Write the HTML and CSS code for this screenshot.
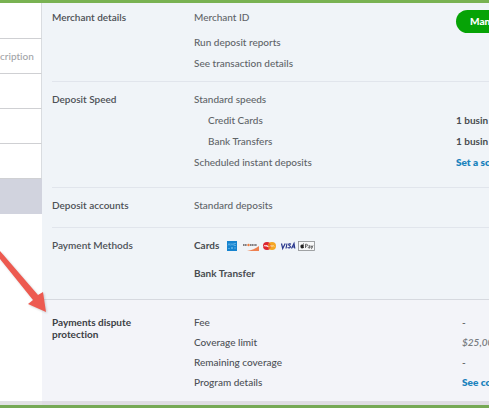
FILE: index.html
```html
<!DOCTYPE html>
<html lang="en">
<head>
  <meta charset="UTF-8">
  <meta name="viewport" content="width=device-width,initial-scale=1">
  <title>Merchant details</title>
  <link rel="stylesheet" href="styles.css">
</head>
<body>
  <div class="page">
    <!-- Transaction list -->
    <aside class="sidebar">
      <div class="cell first"></div>
      <div class="cell heading">cription</div>
      <div class="cell"></div>
      <div class="cell"></div>
      <div class="cell"></div>
      <div class="cell selected"></div>
    </aside>

    <!-- Settings panel -->
    <main class="panel">
      <section class="group merchant">
        <h2>Merchant details</h2>
        <ul>
          <li>Merchant ID <button class="manage" type="button">Man</button></li>
          <li>Run deposit reports</li>
          <li>See transaction details</li>
        </ul>
      </section>

      <section class="group speed">
        <h2>Deposit Speed</h2>
        <ul>
          <li>Standard speeds</li>
          <li class="sub">Credit Cards <b class="value">1 busin</b></li>
          <li class="sub">Bank Transfers <b class="value">1 busin</b></li>
          <li>Scheduled instant deposits <a class="value" href="#">Set a sc</a></li>
        </ul>
      </section>

      <section class="group accounts">
        <h2>Deposit accounts</h2>
        <ul>
          <li>Standard deposits</li>
        </ul>
      </section>

      <section class="group methods">
        <h2>Payment Methods</h2>
        <ul>
          <li>
            <b>Cards</b>
            <svg class="cards" viewBox="0 0 90 12" role="img" aria-label="Accepted cards">
              <!-- Amex -->
              <rect x="1" y="1" width="10" height="10" fill="#1683cf"/>
              <path d="M2 5.5l1-2 1 2M5 5.5v-2l1 1 1-1v2M10 3.5H8v2h2M2 8.5h2M5 7l2 2m0-2L5 9M8 8h2" fill="none" stroke="#7cc4ee" stroke-width=".6"/>
              <!-- Discover -->
              <path d="M17 5h4M24 5h7" stroke="#5b5558" stroke-width="1.6" stroke-dasharray="1.3 .4"/>
              <circle cx="22.5" cy="5" r="1.2" fill="#ed7b3b"/>
              <path d="M33 6v5H21q7-1 12-5z" fill="#ee8050"/>
              <!-- Mastercard -->
              <circle cx="41" cy="6" r="4" fill="#dc2430"/>
              <circle cx="46" cy="6" r="4" fill="#f5a623"/>
              <path d="M43.5 2.9a4 4 0 0 1 0 6.2a4 4 0 0 1 0-6.2z" fill="#ed6a24"/>
              <path d="M38 6.5l1-1.500 1 1.500 1-1.500v1.500h1.500M44 6.500l1-1 1 1 1-1 1 1" fill="none" stroke="#fff" stroke-width=".8"/>
              <!-- Visa -->
              <path d="M55.5 3.500l1.200 5 2.500-5M61 3.500l-1 5M65 4.100q-2.500-.8-2.300.7c.1 1 2 .8 1.700 2.100-.3 1.300-1.700 1.200-2.900.6M65.500 8.500l2.500-5 .8 5M66.500 7h2.200" fill="none" stroke="#27358c" stroke-width="1.2"/>
              <!-- Apple Pay -->
              <rect x="72.5" y="1.5" width="16" height="9" fill="#f7f8f9" stroke="#8b8d90" stroke-width=".8"/>
              <path d="M76.800 4.600c-3-1-3 3.800-.8 3.800 1 0 2.400-.5 2-1.400-.7-.6-.6-1.300.1-1.900-.4-.5-.9-.6-1.300-.5zM77 4.300q0-1.100 1-1.300 0 1.100-1 1.300z" fill="#222"/>
              <path d="M79.500 8V4.200h.8q1.300 0 1.300 1t-1.300 1h-.8M82.500 5.800q1.500-.6 1.500.4V8q-1.800.4-1.700-.6.100-.7 1.700-.6M85 5.400l1 2.400 1-2.400M86 7.800q-.3 1.200-1 1.100" fill="none" stroke="#333" stroke-width=".7"/>
            </svg>
          </li>
          <li><b>Bank Transfer</b></li>
        </ul>
      </section>

      <section class="group dispute">
        <h2>Payments dispute protection</h2>
        <ul>
          <li>Fee <span class="value">-</span></li>
          <li>Coverage limit <i class="value">$25,00</i></li>
          <li>Remaining coverage <span class="value">-</span></li>
          <li>Program details <a class="value" href="#">See co</a></li>
        </ul>
      </section>
    </main>

    <!-- Pointer over the dispute section -->
    <svg class="arrow" viewBox="0 0 50 66" aria-hidden="true">
      <path d="M0 2L38 46L43 43L46 63L28 55L33 51L0 10z" fill="#ed5a50"/>
    </svg>
  </div>
</body>
</html>
```

FILE: styles.css
```css
* { margin: 0; padding: 0; box-sizing: border-box; }

body {
  background: #fff;
  color: #606468;
  font: 500 10px/21px Lato, "Open Sans", sans-serif;
  font-variant-ligatures: none;
  overflow: hidden;
}

.page {
  position: relative;
  display: grid;
  grid-template-columns: 42px 1fr;
  min-height: 100vh;
  border-top: 3px solid #79b252;
  border-bottom: 3px solid #76a955;
}

/* ---- Sidebar ---- */
.sidebar { border-bottom: 4px solid #e2e2e4; }
.cell { height: 35px; border-bottom: 1px solid #cfd0d3; border-right: 1px solid #d9dce0; }
.cell.first { height: 36px; }
.heading { color: #a2a4a7; line-height: 34px; }
.cell.selected { background: #d1d3de; border-color: #d1d3de; }

/* ---- Panel ---- */
.panel {
  display: flex;
  flex-direction: column;
  min-width: 0;
  background: #f0f4f8;
  border-bottom: 4px solid #dfdde3;
}

.group {
  display: grid;
  grid-template-columns: 142px 1fr;
  margin-left: 10px;
  padding-top: 7px;
  border-bottom: 1px solid #e1e5ec;
}
.group h2 { color: #4d5156; font-size: 10px; font-weight: 600; }
.group ul { list-style: none; min-width: 0; }
.group li { display: flex; align-items: center; height: 21px; white-space: nowrap; }
.group b { color: #484c50; font-weight: 700; }
.sub { padding-left: 14px; }

.value { width: 33px; margin-left: auto; overflow: hidden; }
a.value { color: #1b83bd; font-weight: 800; text-decoration: none; }

.manage {
  width: 33px;
  height: 23px;
  margin-left: auto;
  padding-left: 14px;
  border: 0;
  border-radius: 12px 0 0 12px;
  background: #06a306;
  color: #fff;
  font: 900 10px/23px Lato, "Open Sans", sans-serif;
  text-align: left;
  overflow: hidden;
}

.merchant { padding: 4px 0 7px; }
.merchant li:first-child { margin-bottom: 4px; }
.merchant .manage { align-self: flex-start; margin-top: 3px; }
.speed { padding-bottom: 14px; }
.accounts { padding-bottom: 11px; }

.methods { margin-left: 0; padding-left: 10px; padding-bottom: 15px; border-color: #d6d9df; }
.methods li + li { margin-top: 7px; }
.cards { width: 90px; height: 12px; margin-left: 7px; }

.dispute {
  flex: 1;
  margin-left: 0;
  padding: 12px 0 9px 10px;
  border: 0;
  background: #f3f4f9;
  color: #4d5156;
}
.dispute h2 { padding-top: 4px; color: #3c4045; font-weight: 700; line-height: 12px; max-width: 100px; }
.dispute li { height: 20px; }
.dispute .value { width: 27px; }
.dispute i { color: #777b80; font-weight: 600; }

/* ---- Arrow ---- */
.arrow {
  position: absolute;
  left: 0;
  top: 246px;
  width: 50px;
  height: 66px;
  filter: drop-shadow(1px 1px 1px #8886);
}
```
